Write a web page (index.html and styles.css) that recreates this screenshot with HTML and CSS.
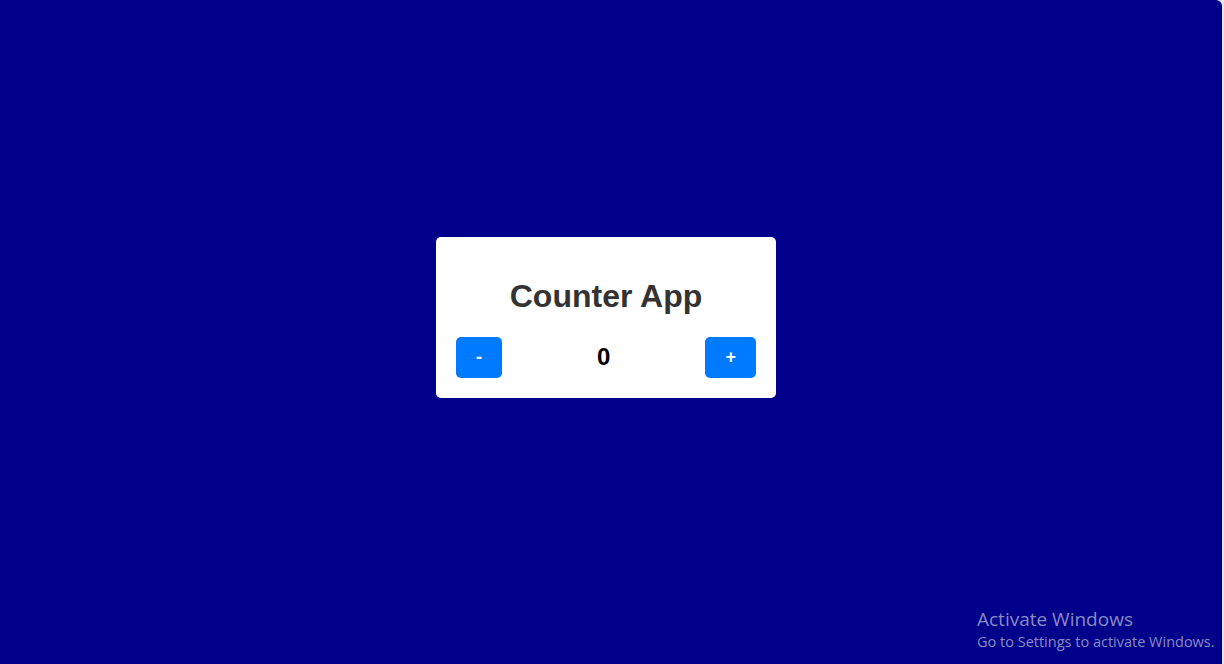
FILE: index.html
```html
<!DOCTYPE html>
<html lang="en">
<head>
<meta charset="utf-8">
<title>Counter App</title>
<link rel="stylesheet" href="styles.css">
</head>
<body>
<div class="screen">
  <div class="card">
    <h1 class="title">Counter App</h1>
    <div class="row">
      <button class="btn">-</button>
      <span class="count">0</span>
      <button class="btn">+</button>
    </div>
  </div>
  <div class="watermark">
    <div class="wm-title">Activate Windows</div>
    <div class="wm-sub">Go to Settings to activate Windows.</div>
  </div>
</div>
</body>
</html>
```
FILE: styles.css
```css
html, body {
  margin: 0;
  padding: 0;
}
body {
  background: #e6e6ee;
  font-family: "Liberation Sans", Arial, sans-serif;
  width: 1224px;
  height: 664px;
  overflow: hidden;
}
.screen {
  position: relative;
  width: 1222px;
  height: 664px;
  box-sizing: border-box;
  padding: 0 10px 29px 0;
  background: #00008b;
  border-top-right-radius: 6px;
  display: flex;
  align-items: center;
  justify-content: center;
}
.card {
  background: #ffffff;
  width: 340px;
  box-sizing: border-box;
  padding: 20px;
  border-radius: 5px;
  text-align: center;
}
.title {
  font-size: 32px;
  font-weight: bold;
  color: #333333;
  margin: 20.44px 0 22.44px;
  line-height: 37px;
}
.row {
  display: flex;
  justify-content: space-between;
  align-items: center;
}
.btn {
  font-family: "Liberation Sans", Arial, sans-serif;
  font-size: 18px;
  font-weight: bold;
  line-height: 21px;
  color: #ffffff;
  background: #007bff;
  border: none;
  border-radius: 5px;
  padding: 10px 20px;
  margin: 0;
}
.count {
  font-size: 24px;
  font-weight: bold;
  color: #000000;
}
.watermark {
  position: absolute;
  left: 977px;
  top: 607px;
  font-family: "Open Sans", "Noto Sans", sans-serif;
  color: #8a8ac0;
}
.wm-title {
  font-size: 19px;
  line-height: 24px;
}
.wm-sub {
  font-size: 14.5px;
  line-height: 21px;
}
```
